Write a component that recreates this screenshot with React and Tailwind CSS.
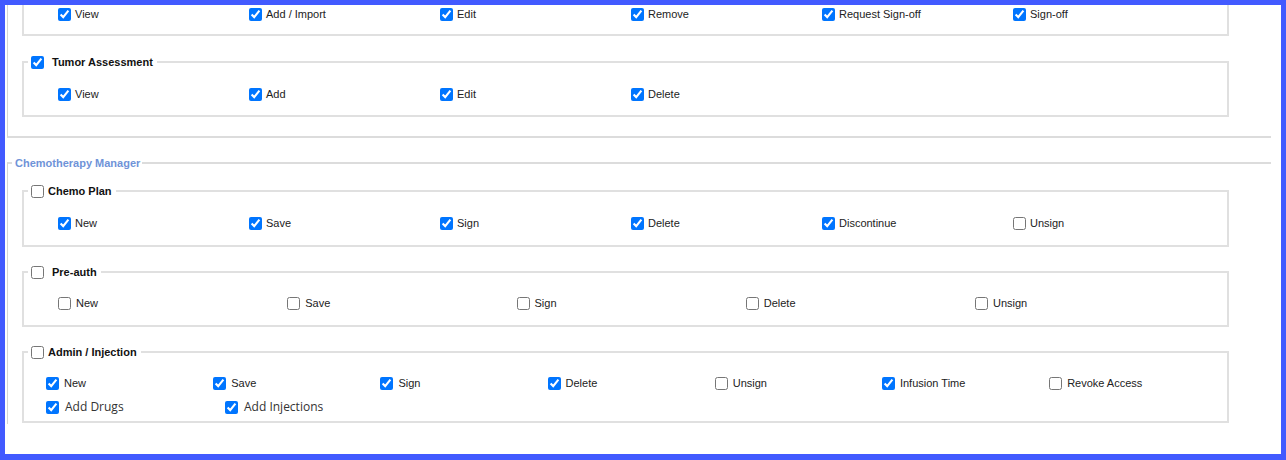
import React from "react";

function Cb({ checked }) {
  return (
    <input
      type="checkbox"
      defaultChecked={checked}
      className="w-[13px] h-[13px] m-0 shrink-0"
    />
  );
}

function Item({ label, checked, gapClass = "gap-[4px]" }) {
  return (
    <label className={"flex items-center h-[14px] whitespace-nowrap " + gapClass}>
      <Cb checked={checked} />
      <span className="leading-[14px]">{label}</span>
    </label>
  );
}

function Legend({ label, checked, textClass }) {
  return (
    <legend className="ml-[4px] pl-[3px] pr-[4px]">
      <div className="flex items-center h-[14px]">
        <Cb checked={checked} />
        <span className={"font-bold text-[#111] leading-[14px] " + textClass}>{label}</span>
      </div>
    </legend>
  );
}

const six = (labels, checks) => labels.map((l, i) => ({ l, c: checks[i] }));

export default function App() {
  const top = six(["View", "Add / Import", "Edit", "Remove", "Request Sign-off", "Sign-off"], [1, 1, 1, 1, 1, 1]);
  const tumor = six(["View", "Add", "Edit", "Delete"], [1, 1, 1, 1]);
  const chemo = six(["New", "Save", "Sign", "Delete", "Discontinue", "Unsign"], [1, 1, 1, 1, 1, 0]);
  const preauth = six(["New", "Save", "Sign", "Delete", "Unsign"], [0, 0, 0, 0, 0]);
  const admin = six(["New", "Save", "Sign", "Delete", "Unsign", "Infusion Time", "Revoke Access"], [1, 1, 1, 1, 0, 1, 0]);

  return (
    <div className="w-[1286px] h-[460px] bg-[#425AFF] pt-[5px] pl-[5px] pr-[5px] pb-[6px] font-['Liberation_Sans',Arial,sans-serif] text-[11px] text-[#222]">
      <div className="w-full h-full bg-white overflow-hidden">
        {/* Section 1 */}
        <div className="ml-[2px] w-[1264px] border-l border-b-2 border-l-[#d4d4d4] border-b-[#dcdcdc] pb-[19px]">
          <fieldset className="ml-[14px] w-[1207px] border-2 border-t-0 border-[#e0e0e0] pt-[2px] pb-[13px]">
            <div className="grid grid-cols-[repeat(6,191px)] pl-[34px]">
              {top.map((it) => (
                <Item key={it.l} label={it.l} checked={!!it.c} />
              ))}
            </div>
          </fieldset>
          <fieldset className="mt-[19px] ml-[14px] w-[1207px] border-2 border-[#e0e0e0] pt-[18px] pb-[14px]">
            <Legend label="Tumor Assessment" checked textClass="ml-[8px]" />
            <div className="grid grid-cols-[repeat(6,191px)] pl-[34px]">
              {tumor.map((it) => (
                <Item key={it.l} label={it.l} checked={!!it.c} />
              ))}
            </div>
          </fieldset>
        </div>

        {/* Section 2 */}
        <fieldset className="mt-[18px] ml-[2px] w-[1264px] border-l border-t-2 border-l-[#d4d4d4] border-t-[#dcdcdc] pb-[1px]">
          <legend className="ml-[4px] pl-[3px] pr-[2px]">
            <div className="h-[14px] leading-[14px] font-bold text-[#6f93d8]">Chemotherapy Manager</div>
          </legend>
          <div className="flex flex-col gap-[18px] pt-[14px]">
            <fieldset className="ml-[14px] w-[1207px] border-2 border-[#e0e0e0] pt-[18px] pb-[15px]">
              <Legend label="Chemo Plan" checked={false} textClass="ml-[4px]" />
              <div className="grid grid-cols-[repeat(6,191px)] pl-[34px]">
                {chemo.map((it) => (
                  <Item key={it.l} label={it.l} checked={!!it.c} />
                ))}
              </div>
            </fieldset>

            <fieldset className="ml-[14px] w-[1207px] border-2 border-[#e0e0e0] pt-[17px] pb-[15px]">
              <Legend label="Pre-auth" checked={false} textClass="ml-[8px]" />
              <div className="grid grid-cols-[repeat(5,229.25px)] pl-[34px]">
                {preauth.map((it) => (
                  <Item key={it.l} label={it.l} checked={!!it.c} gapClass="gap-[5px]" />
                ))}
              </div>
            </fieldset>

            <fieldset className="ml-[14px] w-[1207px] border-2 border-[#e0e0e0] pt-[17px] pb-[7px]">
              <Legend label="Admin / Injection" checked={false} textClass="ml-[4px]" />
              <div className="grid grid-cols-[repeat(7,167.2px)] pl-[22px]">
                {admin.map((it) => (
                  <Item key={it.l} label={it.l} checked={!!it.c} gapClass="gap-[5px]" />
                ))}
              </div>
              <div className="flex pl-[22px] mt-[10px] font-['Open_Sans',sans-serif] text-[12px] text-[#333]">
                <div className="w-[179px]">
                  <Item label="Add Drugs" checked gapClass="gap-[6px]" />
                </div>
                <Item label="Add Injections" checked gapClass="gap-[6px]" />
              </div>
            </fieldset>
          </div>
        </fieldset>
      </div>
    </div>
  );
}
